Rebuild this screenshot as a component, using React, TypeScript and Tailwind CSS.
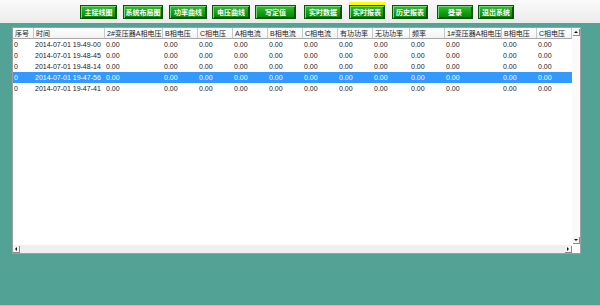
import React from "react";

const buttons = [
  { label: "主接线图", w: 37, ml: 80 },
  { label: "系统布局图", w: 40, ml: 6 },
  { label: "功率曲线", w: 38, ml: 6 },
  { label: "电压曲线", w: 38, ml: 5 },
  { label: "写定值", w: 41, ml: 5 },
  { label: "实时数据", w: 38, ml: 8 },
  { label: "实时报表", w: 36, ml: 7, active: true },
  { label: "历史报表", w: 36, ml: 7 },
  { label: "登录", w: 36, ml: 9 },
  { label: "退出系统", w: 36, ml: 5 },
];

const columns = [
  { label: "序号", w: 21 },
  { label: "时间", w: 71 },
  { label: "2#变压器A相电压", w: 58 },
  { label: "B相电压", w: 35 },
  { label: "C相电压", w: 35 },
  { label: "A相电流", w: 35 },
  { label: "B相电流", w: 35 },
  { label: "C相电流", w: 35 },
  { label: "有功功率", w: 35 },
  { label: "无功功率", w: 37 },
  { label: "频率", w: 35 },
  { label: "1#变压器A相电压", w: 57 },
  { label: "B相电压", w: 35 },
  { label: "C相电压", w: 35 },
];

const rows = [
  "2014-07-01 19-49-00",
  "2014-07-01 19-48-45",
  "2014-07-01 19-48-14",
  "2014-07-01 19-47-56",
  "2014-07-01 19-47-41",
];
const selected = 3;

function ArrowBox({ dir }: { dir: "up" | "down" | "left" | "right" }) {
  const pts = {
    up: "1,4 5,4 3,2",
    down: "1,2 5,2 3,4",
    left: "4,1 4,5 2,3",
    right: "2,1 2,5 4,3",
  }[dir];
  return (
    <div className="flex h-[7px] w-[7px] items-center justify-center border-r border-b border-[#8a8a8a] bg-[#f4f4f4]">
      <svg width="6" height="6" viewBox="0 0 6 6">
        <polygon points={pts} fill="#111" />
      </svg>
    </div>
  );
}

export default function App() {
  return (
    <div
      className="flex h-[306px] w-[600px] flex-col overflow-hidden bg-[#52a395]"
      style={{ fontFamily: '"Liberation Sans", "Noto Sans CJK SC", sans-serif' }}
    >
      <div className="flex h-[23px] shrink-0 items-start bg-gradient-to-b from-[#fbfbfb] to-[#ebebeb] pt-[5px]">
        {buttons.map((b) => (
          <div
            key={b.label}
            className="relative flex h-[14px] items-center justify-center border border-[#0a560a] bg-gradient-to-b from-[#38bd38] via-[#17a017] to-[#0b820b] shadow-[inset_1px_1px_0_#6fdc6f,inset_-1px_-1px_0_#085008] text-[7px] font-bold text-white"
            style={{ width: b.w, marginLeft: b.ml }}
          >
            {b.active && (
              <div className="absolute -top-[4px] -left-px -right-px h-[3px] bg-[#ffff00]" />
            )}
            <span className="leading-none">{b.label}</span>
          </div>
        ))}
      </div>

      <div className="ml-[12px] mt-[4px] flex h-[227px] w-[569px] flex-col border border-[#a0a0a0] bg-white">
        <div className="flex min-h-0 flex-1">
          <div className="flex w-[559px] flex-col text-[7px] text-[#1a1a1a]">
            <div className="flex h-[11px] border-b border-[#a8a8a8] bg-gradient-to-b from-white to-[#f3f3f3]">
              {columns.map((c, i) => (
                <div
                  key={i}
                  className="flex items-center overflow-hidden whitespace-nowrap border-r border-[#c8c8c8] pl-[2px] leading-none"
                  style={{ width: c.w }}
                >
                  {c.label}
                </div>
              ))}
            </div>
            {rows.map((t, r) => (
              <div
                key={r}
                className={
                  "flex h-[11px] items-center " +
                  (r === selected ? "bg-[#3399ff] text-white" : "")
                }
              >
                {columns.map((c, i) => (
                  <div
                    key={i}
                    className="overflow-hidden whitespace-nowrap pl-[1px] leading-none"
                    style={{ width: c.w }}
                  >
                    {i === 0 ? "0" : i === 1 ? t : "0.00"}
                  </div>
                ))}
              </div>
            ))}
          </div>
          <div className="flex w-[8px] flex-col items-center justify-between bg-[#fafafa] py-[1px]">
            <ArrowBox dir="up" />
            <ArrowBox dir="down" />
          </div>
        </div>
        <div className="flex h-[8px] shrink-0">
          <div className="flex w-[559px] items-center justify-between bg-[#efefef]">
            <ArrowBox dir="left" />
            <ArrowBox dir="right" />
          </div>
          <div className="w-[8px] bg-white" />
        </div>
      </div>
      <div className="flex-1" />
      <div className="h-px bg-[#9fd0c6]" />
    </div>
  );
}
